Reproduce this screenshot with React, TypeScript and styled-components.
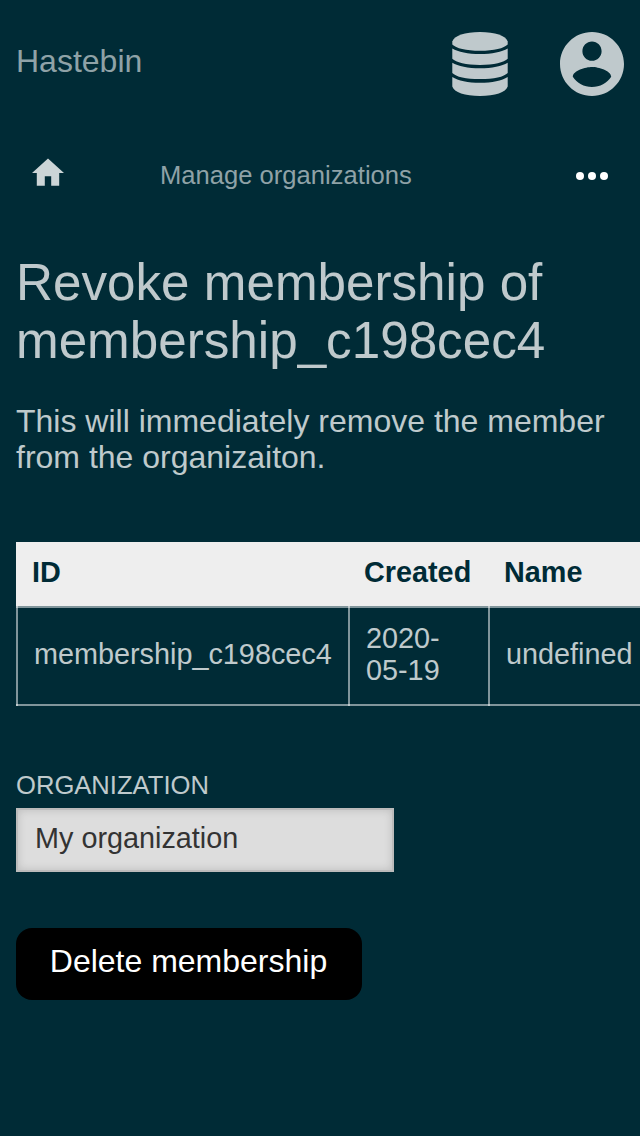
import React from "react";
import styled, { createGlobalStyle } from "styled-components";

const Global = createGlobalStyle`
  html, body { margin: 0; background: #002b36; overflow: hidden; }
  body { font-family: "Liberation Sans", Arial, sans-serif; color: rgba(255,255,255,.75); }
  *, *::before, *::after { box-sizing: border-box; }
`;

const Page = styled.div`
  min-height: 1136px;
  padding: 32px 16px 0;
  overflow: hidden;
`;

const Header = styled.header`
  display: flex;
  height: 64px;
  justify-content: space-between;
`;

const Brand = styled.a`
  font-size: 32px;
  line-height: 36px;
  padding-top: 11px;
  color: #8fa2a7;
`;

const HeaderIcons = styled.div`
  display: flex;
  gap: 52px;
`;

const Icon = styled.svg<{ $w: number; $h: number }>`
  display: block;
  flex: none;
  width: ${(p) => p.$w}px;
  height: ${(p) => p.$h}px;
  fill: currentColor;
`;

const Nav = styled.nav`
  display: flex;
  align-items: center;
  height: 64px;
  margin-top: 48px;
  padding: 0 16px;
`;

const HomeLink = styled.a`
  width: 128px;
  padding-bottom: 6px;
  color: #ccd5d7;
`;

const NavLink = styled.a`
  flex: 1;
  padding-bottom: 2px;
  font-size: 25.6px;
  line-height: 30px;
  color: #8fa2a7;
`;

const MenuButton = styled.span`
  color: #fff;
`;

const Title = styled.h1`
  margin: 46px 0 0;
  font-size: 51.2px;
  font-weight: 400;
  line-height: 58px;
`;

const Lead = styled.p`
  margin: 33px 0 0;
  font-size: 32px;
  line-height: 36px;
`;

const Table = styled.table`
  width: 760px;
  margin-top: 67px;
  table-layout: fixed;
  border-collapse: separate;
  border-spacing: 0;
  font-size: 28.8px;
  line-height: 32px;
`;

const Col = styled.col<{ $w: number }>`
  width: ${(p) => p.$w}px;
`;

const Th = styled.th`
  height: 64px;
  padding: 0 16px 4px;
  background: #eee;
  color: #002b36;
  text-align: left;
`;

const line = "linear-gradient(rgba(255,255,255,.5), rgba(255,255,255,.5))";

const Td = styled.td`
  height: 100px;
  padding: 0 16px 4px 18px;
  background:
    ${line} 0 0 / 2px 100% no-repeat,
    ${line} 0 0 / 100% 2px no-repeat,
    ${line} 0 100% / 100% 2px no-repeat;
`;

const Label = styled.label`
  display: block;
  margin-top: 64px;
  font-size: 25.6px;
  line-height: 30px;
  text-transform: uppercase;
`;

const Field = styled.div`
  display: flex;
  align-items: center;
  width: 378px;
  height: 64px;
  margin-top: 8px;
  padding: 0 17px 4px;
  border: 2px solid #bbb;
  background: #ddd;
  box-shadow: inset 0 0 8px rgba(0, 0, 0, 0.15);
  color: #333;
  font-size: 28.8px;
`;

const DeleteButton = styled.button`
  display: block;
  width: 346px;
  height: 72px;
  margin-top: 56px;
  padding: 0 1px 6px 0;
  border: 0;
  border-radius: 16px;
  background: #000;
  color: #fff;
  font: 32px "Liberation Sans", Arial, sans-serif;
`;

export default function App() {
  return (
    <Page>
      <Global />
      <Header>
        <Brand>Hastebin</Brand>
        <HeaderIcons>
          <Icon $w={56} $h={64} viewBox="0 0 56 64">
            <path d="M.3 9.500C2 3.800 13 0 28 0s26 3.800 27.700 9.500v3C52 16.300 42 18.800 28 18.800S4 16.300.3 12.500z" />
            <path d="M.3 16.500C6 20 16 22 28 22s22-2 27.700-5.500v10.300C52 30.500 42 32.900 28 32.900S4 30.500.3 26.800z" />
            <path d="M.3 30.700C6 34.200 16 36.200 28 36.200s22-2 27.700-5.500v10.200C52 44.700 42 47.100 28 47.100S4 44.700.3 40.900z" />
            <path d="M.3 45C6 48.700 16 50.800 28 50.800s22-2.100 27.700-5.800v9.500C54 60.200 43 64 28 64S2 60.200.3 54.500z" />
          </Icon>
          <Icon $w={64} $h={64} viewBox="2 2 20 20">
            <path d="M12 2C6.480 2 2 6.480 2 12s4.480 10 10 10 10-4.480 10-10S17.520 2 12 2zm0 3c1.660 0 3 1.340 3 3s-1.340 3-3 3-3-1.340-3-3 1.340-3 3-3zm0 14.200c-2.500 0-4.710-1.280-6-3.220.03-1.990 4-3.080 6-3.080 1.990 0 5.970 1.090 6 3.080-1.290 1.940-3.500 3.220-6 3.220z" />
          </Icon>
        </HeaderIcons>
      </Header>
      <Nav>
        <HomeLink>
          <Icon $w={32} $h={32} viewBox="2 2 20 20">
            <path d="M10 20v-6h4v6h5v-8h3L12 3 2 12h3v8z" />
          </Icon>
        </HomeLink>
        <NavLink>Manage organizations</NavLink>
        <MenuButton>
          <Icon $w={32} $h={8} viewBox="0 0 32 8">
            <circle cx="4" cy="4" r="4" />
            <circle cx="16" cy="4" r="4" />
            <circle cx="28" cy="4" r="4" />
          </Icon>
        </MenuButton>
      </Nav>
      <Title>Revoke membership of membership_c198cec4</Title>
      <Lead>This will immediately remove the member from the organizaiton.</Lead>
      <Table>
        <colgroup>
          <Col $w={332} />
          <Col $w={140} />
          <Col $w={288} />
        </colgroup>
        <thead>
          <tr>
            <Th>ID</Th>
            <Th>Created</Th>
            <Th>Name</Th>
          </tr>
        </thead>
        <tbody>
          <tr>
            <Td>membership_c198cec4</Td>
            <Td>2020-05-19</Td>
            <Td>undefined</Td>
          </tr>
        </tbody>
      </Table>
      <Label>Organization</Label>
      <Field>My organization</Field>
      <DeleteButton>Delete membership</DeleteButton>
    </Page>
  );
}
